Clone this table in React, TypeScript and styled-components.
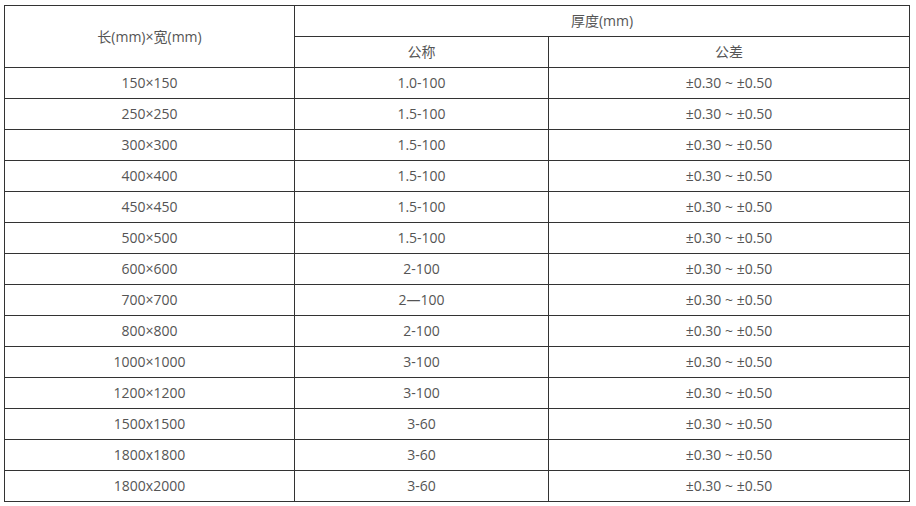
import React from 'react';
import styled, { createGlobalStyle } from 'styled-components';

const GlobalStyle = createGlobalStyle`
  body {
    margin: 0;
    background: #ffffff;
  }
`;

const Wrapper = styled.div`
  padding: 5px 0 0 4px;
`;

const SpecTable = styled.table`
  width: 905px;
  border-collapse: collapse;
  table-layout: fixed;
  font-family: 'Open Sans', 'Noto Sans CJK SC', sans-serif;
  font-size: 14px;
  color: #555555;
`;

const Cell = styled.td<{ $tall?: boolean }>`
  border: 1px solid #333333;
  height: ${props => (props.$tall ? '61px' : '30px')};
  padding: 0;
  text-align: center;
  vertical-align: middle;
  line-height: 20px;
`;

const rows = [
  ['150×150', '1.0-100'],
  ['250×250', '1.5-100'],
  ['300×300', '1.5-100'],
  ['400×400', '1.5-100'],
  ['450×450', '1.5-100'],
  ['500×500', '1.5-100'],
  ['600×600', '2-100'],
  ['700×700', '2—100'],
  ['800×800', '2-100'],
  ['1000×1000', '3-100'],
  ['1200×1200', '3-100'],
  ['1500x1500', '3-60'],
  ['1800x1800', '3-60'],
  ['1800x2000', '3-60'],
];

const App = () => {
  return (
    <>
      <GlobalStyle />
      <Wrapper>
        <SpecTable>
          <colgroup>
            <col style={{ width: 290 }} />
            <col style={{ width: 254 }} />
            <col style={{ width: 361 }} />
          </colgroup>
          <tbody>
            <tr>
              <Cell rowSpan={2}>长(mm)×宽(mm)</Cell>
              <Cell colSpan={2}>厚度(mm)</Cell>
            </tr>
            <tr>
              <Cell>公称</Cell>
              <Cell>公差</Cell>
            </tr>
            {rows.map(([size, nominal]) => (
              <tr key={size}>
                <Cell>{size}</Cell>
                <Cell>{nominal}</Cell>
                <Cell>±0.30 ~ ±0.50</Cell>
              </tr>
            ))}
          </tbody>
        </SpecTable>
      </Wrapper>
    </>
  );
};

export default App;
